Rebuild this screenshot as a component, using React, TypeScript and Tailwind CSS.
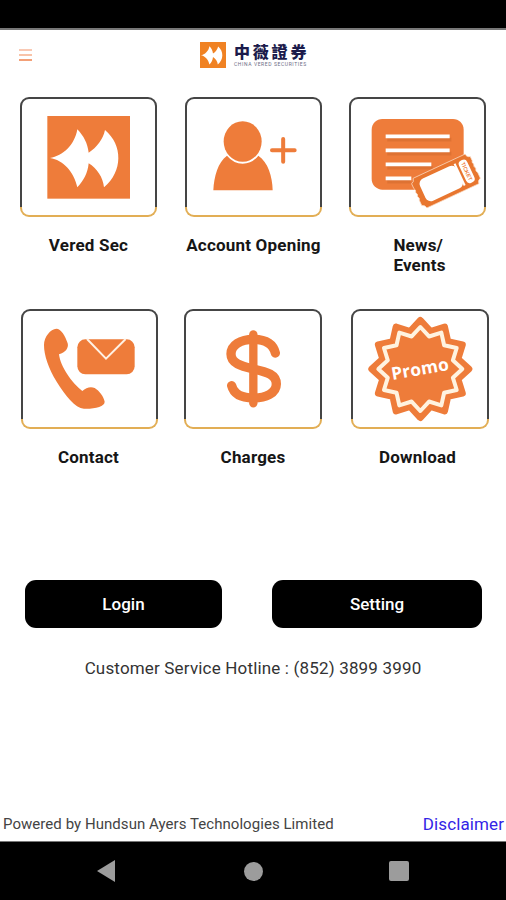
import type { ReactNode } from "react";
import clsx from "clsx";

const ORANGE = "#ee7c3a";

function VeredMark({ fill = ORANGE }: { fill?: string }) {
    return (
        <>
            <rect x="113" y="78" width="248" height="248" fill={fill} />
            <path
                d="M121 204 C160 198 195 165 203 118 C222 138 234 160 237 188 C262 172 280 148 286 120 C340 165 340 245 283 292 C280 262 262 235 237 220 C234 250 222 272 203 292 C193 245 160 210 121 204Z"
                fill="#fff"
            />
        </>
    );
}

function AccountIcon() {
    return (
        <>
            <path d="M117 301 C119 258 131 217 158 197 Q178 221 205 221 Q234 221 252 197 C281 217 294 258 295 301Z" fill={ORANGE} />
            <ellipse cx="205" cy="154.500" rx="57" ry="60.500" fill={ORANGE} />
            <path d="M293 181H361M326.500 147V215" stroke={ORANGE} strokeWidth="12" strokeLinecap="round" />
        </>
    );
}

function NewsIcon() {
    return (
        <>
            <rect x="101" y="87" width="276" height="212" rx="32" fill={ORANGE} />
            <path d="M148 149H340M148 191H340M148 233H284M148 275H218" stroke="#c9662c" strokeOpacity="0.45" strokeWidth="11" />
            <path d="M143 139H335M143 181H335M143 223H280M143 265H220" stroke="#fff" strokeWidth="11" />
            <g transform="translate(324 273) rotate(-25)">
                <path
                    d="M-86 -49 H86 Q86 -38 97 -36 V-22 Q92 -18 97 -11 Q92 -4 97 3 Q92 10 97 18 V36 Q87 38 86 49 H-86 Q-87 38 -97 36 V19 Q-92 13 -97 6 Q-92 0 -97 -7 Q-92 -14 -97 -20 V-36 Q-87 -38 -86 -49Z"
                    fill="#e8762f"
                    stroke="#fbe0cc"
                    strokeWidth="2"
                />
                <rect x="-77" y="-36" width="122" height="73" rx="17" fill="#fff" />
                <path d="M45 -36V36" stroke="#fff" strokeWidth="6" />
                <rect x="55" y="-37" width="27" height="74" rx="12" fill="#fff" />
                <text
                    transform="translate(63 0) rotate(90)"
                    textAnchor="middle"
                    textLength="58"
                    className="font-['Liberation_Sans'] text-[16px] font-bold"
                    fill={ORANGE}
                >
                    TICKET
                </text>
            </g>
        </>
    );
}

function ContactIcon() {
    return (
        <>
            <path
                d="M139 86 C153 86 166 108 173 130 C177 143 166 159 147 163 C151 200 185 248 217 273 C228 262 243 259 254 264 C268 272 281 290 284 305 C284 320 255 327 222 326 C195 324 165 285 140 245 C115 205 102 165 102 135 C102 110 122 87 139 86Z"
                fill={ORANGE}
            />
            <rect x="202" y="118" width="172" height="105" rx="24" fill={ORANGE} />
            <path d="M231 117L288 176L347 117" fill="none" stroke="#fff1e4" strokeWidth="6" />
        </>
    );
}

function ChargesIcon() {
    return (
        <g fill="none" stroke={ORANGE} strokeLinecap="round">
            <path
                d="M304 159 C297 130 272 118 238 118 C199 118 171 136 171 162 C171 190 201 198 238 207 C280 216 307 224 307 252 C307 280 275 294 238 294 C200 294 179 280 173 257"
                strokeWidth="28"
            />
            <path d="M238 103V310" strokeWidth="25" />
        </g>
    );
}

function starPoints(outer: number, inner: number) {
    return Array.from({ length: 24 }, (_, i) => {
        const r = i % 2 ? inner : outer;
        const a = (i * Math.PI) / 12;
        return `${(247 + r * Math.sin(a)).toFixed(1)},${(207 - r * Math.cos(a)).toFixed(1)}`;
    }).join(" ");
}

function PromoIcon() {
    return (
        <>
            <polygon points={starPoints(146, 117)} fill={ORANGE} stroke={ORANGE} strokeWidth="20" strokeLinejoin="round" />
            <polygon points={starPoints(126, 101)} fill="none" stroke="#fff3e0" strokeWidth="12" strokeLinejoin="round" />
            <text
                transform="translate(249 225) rotate(-10)"
                textAnchor="middle"
                textLength="174"
                className="font-['Open_Sans'] text-[52px] font-bold"
                fill="#fff"
            >
                Promo
            </text>
        </>
    );
}

function Tile({ label, viewBox, className, children }: { label: ReactNode; viewBox: string; className?: string; children: ReactNode }) {
    return (
        <button className={clsx("flex w-[137px] flex-col items-center", className)}>
            <span className="block h-[120px] w-full rounded-[9px] bg-[linear-gradient(#454545_0,#454545_110px,#e2ae55_110px)] p-[2px]">
                <span className="block h-full w-full rounded-[7px] bg-white">
                    <svg viewBox={viewBox} className="h-[116px] w-[133px]">{children}</svg>
                </span>
            </span>
            <span className="mt-[18px] whitespace-nowrap text-left text-[17px] font-bold leading-5 tracking-[0.2px] text-[#161616]">
                {label}
            </span>
        </button>
    );
}

function Header() {
    return (
        <header className="flex h-[50px] items-center pl-[19px]">
            <button className="flex w-[13px] flex-col gap-[3px]">
                <span className="h-[2px] bg-[#f9c9b4]" />
                <span className="h-[2px] bg-[#f8c3a8]" />
                <span className="h-[2px] bg-[#f3a077]" />
            </button>
            <svg viewBox="113 78 248 248" className="ml-[168px] size-[26px]">
                <VeredMark fill="#f08223" />
            </svg>
            <div className="ml-2 flex flex-col text-[#1b1b4b]">
                <span className="h-[18px] whitespace-nowrap font-['Noto_Sans_CJK_TC',sans-serif] text-[16px] font-black leading-[16px] tracking-[2.8px]">中薇證券</span>
                <span className="whitespace-nowrap text-[5px] leading-[6px] tracking-[0.6px] text-[#6c6c85]">CHINA VERED SECURITIES</span>
            </div>
        </header>
    );
}

function NavBar() {
    return (
        <nav className="flex h-[59px] items-center border-t border-[#777] bg-black pl-[97px] text-[#9c9c9c]">
            <svg viewBox="0 0 18 22" className="h-[22px] w-[18px]" fill="currentColor">
                <path d="M18 0V22L0 11Z" />
            </svg>
            <span className="ml-[129px] size-[19px] rounded-full bg-[#9c9c9c]" />
            <span className="ml-[126px] size-5 rounded-[2px] bg-[#9c9c9c]" />
        </nav>
    );
}

export default function App() {
    return (
        <div className="flex h-[900px] w-[506px] flex-col overflow-hidden bg-white font-['Roboto',sans-serif]">
            <div className="h-[30px] shrink-0 border-b-2 border-[#777] bg-black" />
            <Header />

            <main className="flex flex-1 flex-col">
                <div className="mt-[17px] grid grid-cols-[165px_164px_137px] items-start pl-5">
                    <Tile label="Vered Sec" viewBox="37 27 399 348">
                        <VeredMark />
                    </Tile>
                    <Tile label="Account Opening" viewBox="38 27 399 348">
                        <AccountIcon />
                    </Tile>
                    <Tile label={<span className="block pl-1">News/<br />Events</span>} viewBox="39 27 399 348">
                        <NewsIcon />
                    </Tile>
                </div>

                <div className="mt-[34px] grid grid-cols-[163px_167px_138px] items-start pl-[21px]">
                    <Tile label={<span className="block pr-[2px]">Contact</span>} viewBox="39 33 399 348">
                        <ContactIcon />
                    </Tile>
                    <Tile label="Charges" viewBox="36 33 399 348" className="w-[138px]">
                        <ChargesIcon />
                    </Tile>
                    <Tile label={<span className="block pr-[5px]">Download</span>} viewBox="45 33 399 348" className="w-[138px]">
                        <PromoIcon />
                    </Tile>
                </div>

                <div className="mt-[113px] flex pl-[25px] text-[17px] font-medium text-white">
                    <button className="h-12 w-[197px] rounded-[11px] bg-black pt-[2px]">Login</button>
                    <button className="ml-[50px] h-12 w-[210px] rounded-[11px] bg-black pt-[2px]">Setting</button>
                </div>
                <p className="mt-[30px] text-center text-[17px] leading-5 tracking-[0.17px] text-[#333]">Customer Service Hotline : (852) 3899 3990</p>
            </main>

            <footer className="flex h-[35px] items-center justify-between pl-[3px] pr-[2px] pt-[2px]">
                <span className="text-[15px] tracking-[0.05px] text-[#444]">Powered by Hundsun Ayers Technologies Limited</span>
                <a className="text-[17px] tracking-[0.1px] text-[#3324e6]">Disclaimer</a>
            </footer>
            <NavBar />
        </div>
    );
}
